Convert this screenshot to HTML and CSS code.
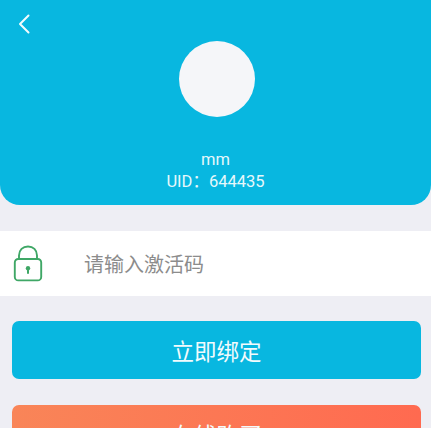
FILE: index.html
```html
<!DOCTYPE html>
<html lang="zh">
<head>
<meta charset="utf-8">
<title>绑定激活码</title>
<link rel="stylesheet" href="styles.css">
</head>
<body>
<div class="page">
  <header class="hero">
    <a class="back" href="#" aria-label="返回">
      <svg width="14" height="22" viewBox="0 0 14 22"><path d="M11.5 2.5 3 11l8.500 8.500" fill="none" stroke="#f2fbfd" stroke-width="2" stroke-linecap="round" stroke-linejoin="round"/></svg>
    </a>
    <div class="avatar"></div>
    <div class="name">mm</div>
    <div class="uid">UID：644435</div>
  </header>
  <div class="code-row">
    <svg class="lock" width="30" height="37" viewBox="0 0 30 37">
      <path d="M6 15V10.500C6 5 9.800 1.500 15 1.500S24 5 24 10.500V15" fill="none" stroke="#3fa766" stroke-width="1.900"/>
      <rect x="1.800" y="14" width="26.400" height="21.400" rx="3.500" fill="none" stroke="#3fa766" stroke-width="1.900"/>
      <circle cx="15" cy="23.300" r="2.200" fill="#3fa766"/>
      <path d="M15 23.500V28" stroke="#3fa766" stroke-width="2" stroke-linecap="round"/>
    </svg>
    <input class="code-input" type="text" placeholder="请输入激活码">
  </div>
  <div class="actions">
    <button class="btn btn-bind" type="button">立即绑定</button>
    <button class="btn btn-buy" type="button">在线购买</button>
  </div>
</div>
</body>
</html>
```
FILE: styles.css
```css
html, body {
  margin: 0;
  padding: 0;
  height: 100%;
  overflow: hidden;
  background: #eeeef4;
}
.page {
  height: 428px;
  overflow: hidden;
  font-family: "Noto Sans CJK SC", "Noto Sans", sans-serif;
}
.hero {
  position: relative;
  box-sizing: border-box;
  height: 205px;
  padding-top: 41px;
  display: flex;
  flex-direction: column;
  align-items: center;
  background: #08b7e0;
  border-radius: 0 0 20px 20px;
  color: #e6f7fb;
}
.back {
  position: absolute;
  left: 17px;
  top: 13px;
  line-height: 0;
}
.avatar {
  width: 76px;
  height: 76px;
  margin-left: 3px;
  border-radius: 50%;
  background: #f5f6f9;
}
.name {
  margin-top: 32px;
  font-family: Roboto, "Noto Sans", sans-serif;
  font-size: 16.5px;
  line-height: 22px;
}
.uid {
  font-family: Roboto, "Noto Sans CJK SC", sans-serif;
  font-size: 16.5px;
  line-height: 22px;
}
.code-row {
  box-sizing: border-box;
  height: 65px;
  margin-top: 26px;
  padding-left: 13px;
  display: flex;
  align-items: center;
  background: #fff;
}
.lock {
  flex: none;
}
.code-input {
  flex: 1;
  min-width: 0;
  margin-left: 41px;
  padding: 0;
  border: 0;
  outline: 0;
  background: transparent;
  font-family: inherit;
  font-size: 20px;
}
.code-input::placeholder {
  color: #8c8c8c;
  opacity: 1;
}
.actions {
  display: flex;
  flex-direction: column;
  gap: 26px;
  margin: 25px 10px 0 12px;
}
.btn {
  flex: none;
  height: 58px;
  padding: 0;
  border: 0;
  border-radius: 7px;
  color: #f2fbfd;
  font-family: inherit;
  font-size: 22.500px;
}
.btn-bind {
  background: #08b7e0;
}
.btn-buy {
  background: linear-gradient(90deg, #f98558, #ff6a50);
}
```
